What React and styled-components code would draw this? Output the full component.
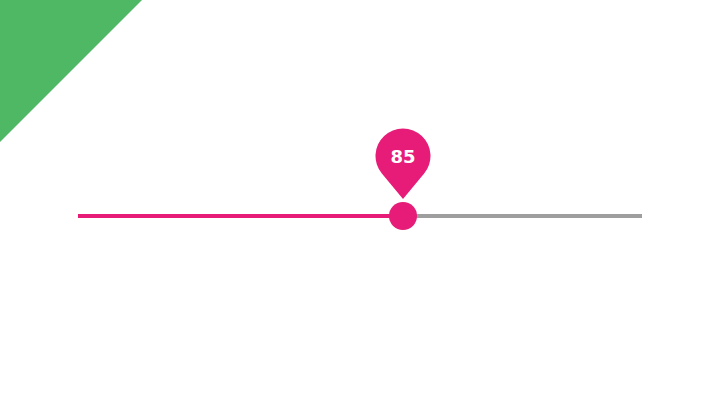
import React from "react";
import styled, { createGlobalStyle } from "styled-components";

const GlobalStyle = createGlobalStyle`
  body {
    margin: 0;
    background: #ffffff;
    font-family: "DejaVu Sans", "Noto Sans", sans-serif;
  }
`;

const PINK = "#e61c78";

const App = () => {
  const value = 85;
  const fillPx = 325;

  return (
    <Page>
      <GlobalStyle />
      <Corner />
      <SliderArea>
        <Track>
          <Fill style={{ width: fillPx }} />
          <Thumb style={{ left: fillPx }}>
            <Bubble>
              <svg width="56" height="72" viewBox="0 0 56 72">
                <path
                  d="M6.86 45.59 L28 71 L49.14 45.59 A27.5 27.5 0 1 0 6.86 45.59 Z"
                  fill={PINK}
                />
              </svg>
              <Label>{value}</Label>
            </Bubble>
          </Thumb>
        </Track>
      </SliderArea>
    </Page>
  );
};

export default App;

const Page = styled.div`
  position: relative;
  width: 720px;
  height: 400px;
  overflow: hidden;
  background: #ffffff;
`;

const Corner = styled.div`
  position: absolute;
  top: 0;
  left: 0;
  width: 142px;
  height: 142px;
  background: #4fb864;
  clip-path: polygon(0 0, 100% 0, 0 100%);
`;

const SliderArea = styled.div`
  padding: 214px 78px 0;
`;

const Track = styled.div`
  position: relative;
  height: 4px;
  background: #9e9e9e;
`;

const Fill = styled.div`
  height: 100%;
  background: ${PINK};
`;

const Thumb = styled.div`
  position: absolute;
  top: 2px;
  width: 28px;
  height: 28px;
  border-radius: 50%;
  background: ${PINK};
  transform: translate(-50%, -50%);
`;

const Bubble = styled.div`
  position: absolute;
  left: 50%;
  bottom: 30px;
  width: 56px;
  height: 72px;
  transform: translateX(-50%);

  svg {
    display: block;
  }
`;

const Label = styled.span`
  position: absolute;
  top: 0;
  left: 0;
  width: 56px;
  height: 56px;
  display: flex;
  align-items: center;
  justify-content: center;
  color: #ffffff;
  font-size: 18px;
  font-weight: 700;
`;
